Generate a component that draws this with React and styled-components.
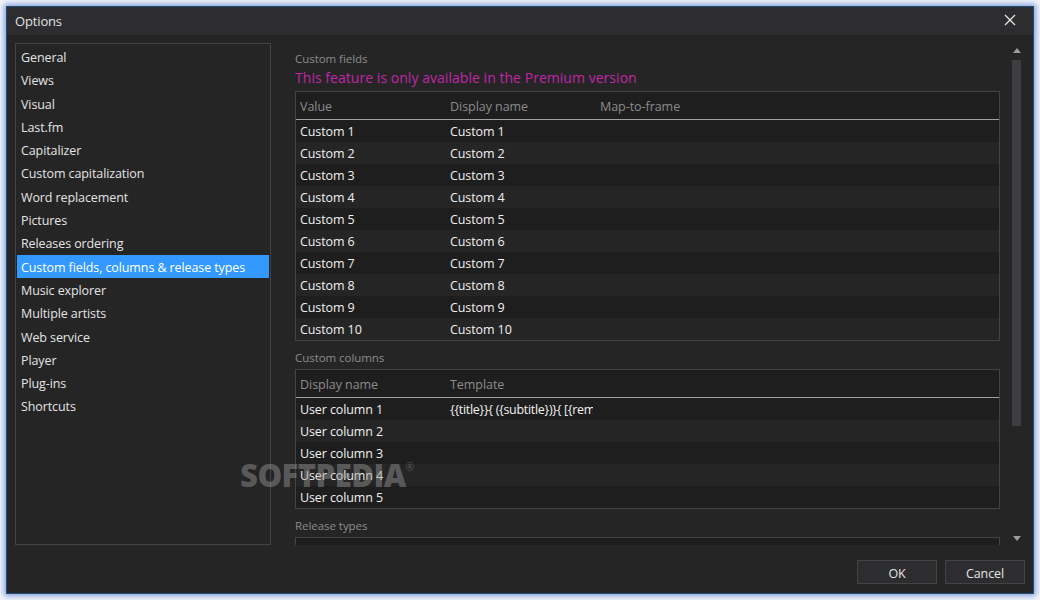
import React from "react";
import styled, { createGlobalStyle } from "styled-components";

const navItems = [
  "General",
  "Views",
  "Visual",
  "Last.fm",
  "Capitalizer",
  "Custom capitalization",
  "Word replacement",
  "Pictures",
  "Releases ordering",
  "Custom fields, columns & release types",
  "Music explorer",
  "Multiple artists",
  "Web service",
  "Player",
  "Plug-ins",
  "Shortcuts",
];

const customFields = Array.from({ length: 10 }, (_, i) => `Custom ${i + 1}`);
const userColumns = [
  { name: "User column 1", template: "{{title}}{ ({subtitle})}{ [{remix}]}" },
  { name: "User column 2", template: "" },
  { name: "User column 3", template: "" },
  { name: "User column 4", template: "" },
  { name: "User column 5", template: "" },
];

const App = () => {
  return (
    <>
      <GlobalStyle />
      <Window>
        <TitleBar>
          <Title>Options</Title>
          <CloseButton>
            <svg width="12" height="12" viewBox="0 0 12 12">
              <path d="M1 1L11 11M11 1L1 11" stroke="#e6e6e6" strokeWidth="1.3" fill="none" />
            </svg>
          </CloseButton>
        </TitleBar>
        <Main>
          <NavList>
            {navItems.map((item) => (
              <NavItem key={item} $active={item.startsWith("Custom fields")}>
                {item}
              </NavItem>
            ))}
          </NavList>
          <Content>
            <Scroller>
              <SectionLabel>Custom fields</SectionLabel>
              <Premium>This feature is only available in the Premium version</Premium>
              <Table>
                <HeaderRow>
                  <HeaderCell>Value</HeaderCell>
                  <HeaderCell>Display name</HeaderCell>
                  <HeaderCell>Map-to-frame</HeaderCell>
                </HeaderRow>
                {customFields.map((name) => (
                  <Row key={name}>
                    <Cell>{name}</Cell>
                    <Cell>{name}</Cell>
                    <Cell />
                  </Row>
                ))}
              </Table>
              <SectionLabel $spaced>Custom columns</SectionLabel>
              <Table>
                <HeaderRow>
                  <HeaderCell>Display name</HeaderCell>
                  <HeaderCell>Template</HeaderCell>
                </HeaderRow>
                {userColumns.map((col) => (
                  <Row key={col.name}>
                    <Cell>{col.name}</Cell>
                    <TemplateCell>{col.template}</TemplateCell>
                  </Row>
                ))}
              </Table>
              <SectionLabel $spaced>Release types</SectionLabel>
              <Table>
                <HeaderRow />
              </Table>
            </Scroller>
            <ScrollBar>
              <Arrow $up />
              <Track>
                <Thumb />
              </Track>
              <Arrow />
            </ScrollBar>
          </Content>
        </Main>
        <Footer>
          <DialogButton>OK</DialogButton>
          <DialogButton>Cancel</DialogButton>
        </Footer>
        <Watermark>
          SOFTPEDIA<sup>®</sup>
        </Watermark>
      </Window>
    </>
  );
};

const GlobalStyle = createGlobalStyle`
  html, body {
    margin: 0;
    padding: 0;
    background: #f4f6fb;
    overflow: hidden;
  }
  #root {
    padding: 6px;
    font-family: "Open Sans", "Noto Sans", sans-serif;
  }
`;

const Window = styled.div`
  position: relative;
  box-sizing: border-box;
  width: 1028px;
  height: 588px;
  display: flex;
  flex-direction: column;
  background: #252526;
  border: 1px solid #1c4f7c;
  box-shadow: 0 0 6px 2px #7f9fd6;
`;

const TitleBar = styled.div`
  height: 28px;
  flex: none;
  display: flex;
  align-items: center;
  justify-content: space-between;
  padding: 0 17px 0 8px;
  background: #2d2d30;
`;

const Title = styled.div`
  color: #e2e2e2;
  font-size: 13px;
  letter-spacing: -0.15px;
`;

const CloseButton = styled.div`
  display: flex;
  align-items: center;
  padding-bottom: 3px;
`;

const Main = styled.div`
  flex: 1;
  min-height: 0;
  display: flex;
  padding: 8px 8px 0 8px;
`;

const NavList = styled.div`
  box-sizing: border-box;
  width: 256px;
  height: 502px;
  flex: none;
  padding: 1.5px 1px;
  border: 1px solid #434346;
`;

const NavItem = styled.div`
  height: 23.3px;
  line-height: 24px;
  padding-top: 0.5px;
  box-sizing: border-box;
  padding-left: 4px;
  font-size: 12.5px;
  letter-spacing: -0.1px;
  white-space: nowrap;
  color: ${(p) => (p.$active ? "#ffffff" : "#e4e4e4")};
  background: ${(p) => (p.$active ? "#3399ff" : "transparent")};
`;

const Content = styled.div`
  flex: 1;
  min-width: 0;
  height: 502px;
  display: flex;
  padding-left: 24px;
`;

const Scroller = styled.div`
  width: 705px;
  flex: none;
  overflow: hidden;
  padding-top: 8px;
`;

const SectionLabel = styled.div`
  height: 16px;
  line-height: 16px;
  margin-top: ${(p) => (p.$spaced ? "9px" : "0")};
  margin-bottom: ${(p) => (p.$spaced ? "3px" : "0")};
  font-size: 11.5px;
  letter-spacing: -0.05px;
  color: #8c8c8c;
`;

const Premium = styled.div`
  height: 24px;
  line-height: 22px;
  font-size: 14px;
  letter-spacing: 0.04px;
  color: #c026a8;
  white-space: nowrap;
`;

const Table = styled.div`
  box-sizing: border-box;
  border: 1px solid #434346;
  background: #1e1e1e;
`;

const HeaderRow = styled.div`
  box-sizing: border-box;
  height: 28px;
  padding-top: 2px;
  display: grid;
  grid-template-columns: repeat(3, 150px);
  align-items: center;
  border-bottom: 1px solid #a0a0a0;
  background: #1e1e1e;
`;

const HeaderCell = styled.div`
  padding-left: 4px;
  font-size: 12.5px;
  letter-spacing: -0.05px;
  color: #8c8c8c;
`;

const Row = styled.div`
  height: 22px;
  display: grid;
  grid-template-columns: repeat(3, 150px);
  align-items: center;
  background: #1e1e1e;

  &:nth-child(odd) {
    background: #252526;
  }
`;

const Cell = styled.div`
  box-sizing: border-box;
  width: 147px;
  padding-left: 4px;
  overflow: hidden;
  white-space: nowrap;
  font-size: 12.5px;
  letter-spacing: -0.1px;
  color: #f0f0f0;
`;

const TemplateCell = styled(Cell)`
  letter-spacing: -0.3px;
`;

const ScrollBar = styled.div`
  width: 9px;
  margin-left: 12px;
  display: flex;
  flex-direction: column;
  align-items: center;
  padding-top: 5px;
`;

const Arrow = styled.div`
  width: 0;
  height: 0;
  flex: none;
  border-left: 4.5px solid transparent;
  border-right: 4.5px solid transparent;
  ${(p) =>
    p.$up ? "border-bottom: 5px solid #9a9a9a;" : "border-top: 5px solid #9a9a9a;"}
`;

const Track = styled.div`
  width: 9px;
  height: 471px;
  margin: 7px 0 5px;
`;

const Thumb = styled.div`
  width: 9px;
  height: 366px;
  background: #3e3e42;
`;

const Footer = styled.div`
  height: 49px;
  flex: none;
  box-sizing: border-box;
  display: flex;
  justify-content: flex-end;
  gap: 8px;
  padding: 16px 8px 0 0;
`;

const DialogButton = styled.div`
  box-sizing: border-box;
  width: 80px;
  height: 24px;
  padding-top: 2px;
  display: flex;
  align-items: center;
  justify-content: center;
  background: #2d2d30;
  border: 1px solid #434346;
  color: #e4e4e4;
  font-size: 12.5px;
  letter-spacing: -0.1px;
`;

const Watermark = styled.div`
  position: absolute;
  left: 233px;
  top: 447px;
  font-family: "Open Sans", sans-serif;
  font-size: 31px;
  font-weight: 800;
  letter-spacing: -0.5px;
  color: rgba(150, 150, 150, 0.48);
  white-space: nowrap;
  pointer-events: none;

  sup {
    font-size: 10px;
    font-weight: 400;
    vertical-align: 16px;
    line-height: 0;
    letter-spacing: 0;
  }
`;

export default App;
